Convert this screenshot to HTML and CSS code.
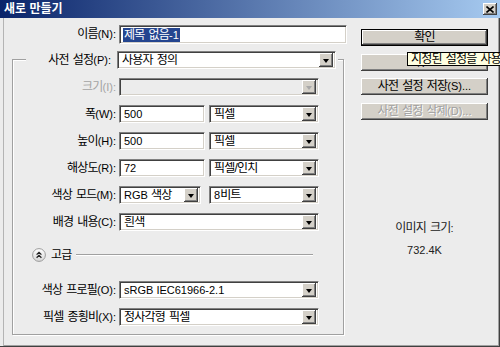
FILE: index.html
```html
<!DOCTYPE html>
<html lang="ko">
<head>
<meta charset="utf-8">
<title>새로 만들기</title>
<link rel="stylesheet" href="styles.css">
</head>
<body>
<div class="dialog">
  <div class="titlebar">
    <span class="title">새로 만들기</span>
    <span class="close"><svg width="8" height="7" viewBox="0 0 8 7"><path d="M0.5 0.5 L7.5 6.5 M7.5 0.5 L0.5 6.5" stroke="#000" stroke-width="1.6" fill="none"/></svg></span>
  </div>
  <div class="body">
    <div class="left">
      <div class="name-row">
        <span class="lbl"><span class="ko">이름</span>(N):</span>
        <div class="input w-name"><span class="sel"><span class="ko">제목 없음</span>-1</span></div>
      </div>
      <div class="group">
        <div class="caption">
          <span class="lbl cap-lbl"><span class="ko">사전 설정</span>(P):</span>
          <div class="combo w-preset"><span class="val ko">사용자 정의</span><i class="arrow"></i></div>
        </div>
        <div class="rows">
          <span class="lbl disabled"><span class="ko">크기</span>(I):</span>
          <div class="fields"><div class="combo w-full off"><span class="val"></span><i class="arrow"></i></div></div>

          <span class="lbl"><span class="ko">폭</span>(W):</span>
          <div class="fields gap-s"><div class="input w-num"><span class="val">500</span></div><div class="combo w-unit"><span class="val ko">픽셀</span><i class="arrow"></i></div></div>

          <span class="lbl"><span class="ko">높이</span>(H):</span>
          <div class="fields gap-s"><div class="input w-num"><span class="val">500</span></div><div class="combo w-unit"><span class="val ko">픽셀</span><i class="arrow"></i></div></div>

          <span class="lbl"><span class="ko">해상도</span>(R):</span>
          <div class="fields gap-s"><div class="input w-num"><span class="val">72</span></div><div class="combo w-unit"><span class="val ko">픽셀/인치</span><i class="arrow"></i></div></div>

          <span class="lbl"><span class="ko">색상 모드</span>(M):</span>
          <div class="fields gap-m"><div class="combo w-mode"><span class="val">RGB <span class="ko">색상</span></span><i class="arrow"></i></div><div class="combo w-unit"><span class="val">8<span class="ko">비트</span></span><i class="arrow"></i></div></div>

          <span class="lbl"><span class="ko">배경 내용</span>(C):</span>
          <div class="fields"><div class="combo w-full"><span class="val ko">흰색</span><i class="arrow"></i></div></div>
        </div>
        <div class="advanced">
          <svg class="adv-icon" width="14" height="14" viewBox="0 0 14 14">
            <defs><linearGradient id="advg" x1="0" y1="0" x2="0" y2="1"><stop offset="0" stop-color="#ffffff"/><stop offset="1" stop-color="#d6d6d6"/></linearGradient></defs>
            <circle cx="7" cy="7" r="6.4" fill="url(#advg)" stroke="#9c9c9c" stroke-width="1"/>
            <path d="M4.6 6.6 L7 4.3 L9.4 6.6 M4.6 9.7 L7 7.4 L9.4 9.7" fill="none" stroke="#222" stroke-width="1.3"/>
          </svg>
          <span class="adv-text ko">고급</span>
          <span class="sep"></span>
        </div>
        <div class="rows rows2">
          <span class="lbl"><span class="ko">색상 프로필</span>(O):</span>
          <div class="fields"><div class="combo w-full"><span class="val">sRGB IEC61966-2.1</span><i class="arrow"></i></div></div>

          <span class="lbl"><span class="ko">픽셀 종횡비</span>(X):</span>
          <div class="fields"><div class="combo w-full"><span class="val ko">정사각형 픽셀</span><i class="arrow"></i></div></div>
        </div>
      </div>
    </div>
    <div class="right">
      <div class="btn default"><span class="ko">확인</span></div>
      <div class="btn"><span class="ko">취소</span></div>
      <div class="btn"><span class="ko">사전 설정 저장</span>(S)...</div>
      <div class="btn off"><span class="ko">사전 설정 삭제</span>(D)...</div>
      <div class="tooltip ko">지정된 설정을 사용하여 새 문서를 만듭니다.</div>
      <div class="imgsize">
        <div class="imgsize-title"><span class="ko">이미지 크기</span>:</div>
        <div class="imgsize-value">732.4K</div>
      </div>
    </div>
  </div>
</div>
</body>
</html>
```

FILE: styles.css
```css
* { box-sizing: border-box; }
html, body { margin: 0; padding: 0; }
body {
  width: 500px;
  height: 347px;
  overflow: hidden;
  background: #ececec;
  font-family: "Liberation Sans", "Noto Sans CJK KR", sans-serif;
  font-size: 11px;
  line-height: 13px;
  color: #000;
}
.ko {
  font-size: 12px;
  letter-spacing: -0.8px;
  word-spacing: 1.5px;
}
.dialog {
  width: 500px;
  height: 347px;
  display: flex;
  flex-direction: column;
  background: #ececec;
}
.titlebar {
  flex: none;
  height: 18px;
  display: flex;
  align-items: center;
  justify-content: space-between;
  padding: 0 3px 0 4px;
  background: linear-gradient(to right, #0a246a 0%, #a6caf0 100%);
}
.title {
  color: #fff;
  font-weight: bold;
  font-size: 12px;
  line-height: 14px;
}
.close {
  width: 14px;
  height: 12px;
  display: flex;
  align-items: center;
  justify-content: center;
  background: #d4d0c8;
  box-shadow: inset -1px -1px #404040, inset 1px 1px #fff, inset -2px -2px #808080;
}
.body {
  flex: 1;
  display: flex;
  align-items: flex-start;
  padding: 7px 0 0 12px;
  border-right: 1px solid #404040;
  border-bottom: 1px solid #404040;
  box-shadow: inset 3px 0 #ececec, inset 4px 0 #b4b4b4, inset -1px -1px #a0a0a0;
}
.left {
  flex: none;
  width: 335px;
}
.lbl {
  text-align: right;
  white-space: nowrap;
}
.lbl.disabled { color: #a3a3a3; }
.name-row {
  display: grid;
  grid-template-columns: 104px 228px;
  column-gap: 3px;
  align-items: center;
  height: 19px;
}
.input, .combo {
  height: 18px;
  display: flex;
  align-items: center;
  background: #fff;
  border: 1px solid;
  border-color: #808080 #fff #fff #808080;
  box-shadow: inset 1px 1px #404040, inset -1px -1px #d4d0c8;
  padding: 0 2px 0 4px;
  white-space: nowrap;
  overflow: hidden;
}
.input.w-name { height: 19px; padding-left: 3px; }
.sel {
  background: #24458f;
  color: #fff;
  padding: 0 1px;
  line-height: 14px;
}
.val { flex: 1; overflow: hidden; }
.combo.off { background: #ececec; }
.arrow {
  flex: none;
  margin-left: auto;
  width: 14px;
  height: 14px;
  display: flex;
  align-items: center;
  justify-content: center;
  background: #d4d0c8;
  box-shadow: inset -1px -1px #404040, inset 1px 1px #fff, inset -2px -2px #808080;
}
.arrow::before {
  content: "";
  width: 0;
  height: 0;
  border-left: 3.5px solid transparent;
  border-right: 3.5px solid transparent;
  border-top: 4px solid #000;
  margin-top: 1px;
}
.combo.off .arrow::before { border-top-color: #a8a8a8; }

.group {
  margin-top: 15px;
  width: 332px;
  border: 1px solid #a0a0a0;
  box-shadow: inset 1px 1px #fff, 1px 1px #fff;
  padding: 0 0 8px;
}
.caption {
  display: flex;
  align-items: center;
  width: 312px;
  height: 18px;
  margin: -9px 0 0 13px;
  padding-right: 2px;
  background: #ececec;
}
.cap-lbl { width: 85px; margin-right: 6px; }
.w-preset { width: 219px; }
.rows {
  display: grid;
  grid-template-columns: 103px auto;
  column-gap: 3px;
  row-gap: 9px;
  align-items: center;
  margin-top: 9px;
}
.rows2 { margin-top: 19px; }
.fields { display: flex; }
.fields.gap-s { gap: 4px; }
.fields.gap-m { gap: 8px; }
.w-full { width: 200px; }
.w-num { width: 86px; }
.w-unit { width: 110px; }
.w-mode { width: 82px; }

.advanced {
  display: flex;
  align-items: center;
  gap: 5px;
  height: 14px;
  margin: 17px 30px 0 19px;
}
.adv-icon { flex: none; display: block; }
.adv-text { white-space: nowrap; }
.sep {
  flex: 1;
  height: 2px;
  border-top: 1px solid #a0a0a0;
  border-bottom: 1px solid #fff;
}

.right {
  position: relative;
  flex: none;
  width: 127px;
  margin-left: 14px;
  padding-top: 4px;
  display: flex;
  flex-direction: column;
  gap: 7.5px;
}
.btn {
  height: 17px;
  display: flex;
  align-items: center;
  justify-content: center;
  white-space: nowrap;
  background: #d4d0c8;
  box-shadow: inset -1px -1px #404040, inset 1px 1px #fff, inset -2px -2px #808080;
}
.btn.default {
  border: 1px solid #000;
}
.btn.off {
  color: #a0a0a0;
  text-shadow: 1px 1px #fff;
}
.tooltip {
  position: absolute;
  left: 46px;
  top: 27px;
  height: 14px;
  padding: 0 3px;
  background: #ffffe1;
  border: 1px solid #000;
  white-space: nowrap;
  line-height: 12px;
}
.imgsize {
  margin-top: 95px;
  text-align: center;
  color: #222;
}
.imgsize-value { margin-top: 9px; }
```
